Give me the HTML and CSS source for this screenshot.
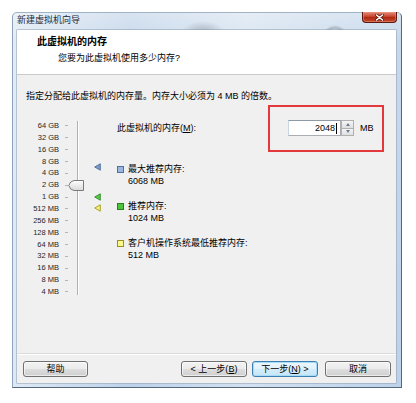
FILE: index.html
```html
<!DOCTYPE html>
<html lang="zh">
<head>
<meta charset="utf-8">
<link rel="stylesheet" href="styles.css">
</head>
<body>
<div class="window">
  <div class="titlebar">
    <span class="title">新建虚拟机向导</span>
    <div class="close">
      <svg width="9" height="7" viewBox="0 0 9 7"><path d="M1.5 1 L7.5 6 M7.5 1 L1.5 6" stroke="#5a1a10" stroke-width="3" stroke-linecap="round"/><path d="M1.5 1 L7.5 6 M7.5 1 L1.5 6" stroke="#fff" stroke-width="1.6" stroke-linecap="round"/></svg>
    </div>
  </div>
  <div class="content">
    <div class="header">
      <div class="h-title">此虚拟机的内存</div>
      <div class="h-sub">您要为此虚拟机使用多少内存?</div>
    </div>
    <div class="body">
      <p class="intro">指定分配给此虚拟机的内存量。内存大小必须为 4 MB 的倍数。</p>
      <div class="main">
        <div class="slider">
          <ul class="labels">
            <li>64 GB</li><li>32 GB</li><li>16 GB</li><li>8 GB</li><li>4 GB</li><li>2 GB</li><li>1 GB</li><li>512 MB</li><li>256 MB</li><li>128 MB</li><li>64 MB</li><li>32 MB</li><li>16 MB</li><li>8 MB</li><li>4 MB</li>
          </ul>
          <div class="ticks">
            <i></i><i></i><i></i><i></i><i></i><i></i><i></i><i></i><i></i><i></i><i></i><i></i><i></i><i></i><i></i>
          </div>
          <div class="track"></div>
          <svg class="thumb" width="16" height="11" viewBox="0 0 16 11">
            <defs><linearGradient id="tg" x1="0" y1="0" x2="0" y2="1"><stop offset="0" stop-color="#ffffff"/><stop offset="1" stop-color="#d8d8d8"/></linearGradient></defs>
            <path d="M0.8 5.5 Q2 1 6 0.5 H15.5 V10.5 H6 Q2 10 0.8 5.5 Z" fill="url(#tg)" stroke="#7a7a7a" stroke-width="1"/>
          </svg>
          <svg class="marker m-max" width="7" height="8" viewBox="0 0 7 8"><path d="M0.7 4 L6.3 0.8 V7.2 Z" fill="#7d9cc8" stroke="#4a6a98" stroke-width="0.9" stroke-linejoin="round"/></svg>
          <svg class="marker m-rec" width="7" height="8" viewBox="0 0 7 8"><path d="M0.7 4 L6.3 0.8 V7.2 Z" fill="#5cc84a" stroke="#2f8a2a" stroke-width="0.9" stroke-linejoin="round"/></svg>
          <svg class="marker m-min" width="7" height="8" viewBox="0 0 7 8"><path d="M0.7 4 L6.3 0.8 V7.2 Z" fill="#f4ee7a" stroke="#a49a20" stroke-width="0.9" stroke-linejoin="round"/></svg>
        </div>
        <div class="right">
          <div class="mem-row">
            <span class="mem-label">此虚拟机的内存(<u>M</u>):</span>
            <div class="spin-group">
              <div class="input"><span>2048</span><i class="caret"></i></div>
              <div class="spinner">
                <div class="spin-btn"><i class="up"></i></div>
                <div class="spin-btn"><i class="down"></i></div>
              </div>
              <span class="unit">MB</span>
              <div class="highlight"></div>
            </div>
          </div>
          <div class="legend">
            <div class="item"><span class="sq sq-blue"></span><div>最大推荐内存:<br>6068 MB</div></div>
            <div class="item"><span class="sq sq-green"></span><div>推荐内存:<br>1024 MB</div></div>
            <div class="item"><span class="sq sq-yellow"></span><div>客户机操作系统最低推荐内存:<br>512 MB</div></div>
          </div>
        </div>
      </div>
    </div>
    <div class="footer">
      <div class="btn btn-help">帮助</div>
      <div class="btn-group">
        <div class="btn">&lt; 上一步(<u>B</u>)</div>
        <div class="btn btn-default">下一步(<u>N</u>) &gt;</div>
        <div class="btn btn-cancel">取消</div>
      </div>
    </div>
  </div>
</div>
</body>
</html>
```
FILE: styles.css
```css
* { box-sizing: border-box; }
body {
  margin: 0;
  background: #ffffff;
  font-family: "Liberation Sans", "Noto Sans CJK SC", sans-serif;
  font-size: 9px;
  color: #000;
}
.window {
  margin: 12px 0 0 12px;
  width: 390px;
  height: 376px;
  border: 1px solid #56677c;
  border-left-color: #8ea4bc;
  border-top-color: #9fb2c6;
  border-radius: 5px 5px 0 0;
  padding: 0 5px 4px 4px;
  display: flex;
  flex-direction: column;
  background:
    radial-gradient(ellipse 22px 12px at 190px 20px, rgba(70,80,90,0.35), rgba(70,80,90,0) 100%),
    radial-gradient(circle at 322px 26px, rgba(90,100,110,0) 9px, rgba(90,100,110,0.35) 11px, rgba(90,100,110,0) 14px),
    linear-gradient(90deg, rgba(255,255,255,0.5) 0%, rgba(255,255,255,0) 30%, rgba(255,255,255,0.35) 60%, rgba(255,255,255,0) 100%),
    linear-gradient(180deg, #d7e3f0 0%, #c6d8ec 8%, #bcd2ea 100%);
}
.titlebar {
  height: 17px;
  display: flex;
  justify-content: space-between;
  align-items: flex-start;
}
.title {
  padding-top: 1px;
  line-height: 12px;
  font-size: 9px;
  color: #1e2a36;
}
.close {
  width: 35px;
  height: 11px;
  margin-top: -1px;
  margin-right: -1px;
  border: 1px solid #5b1a10;
  border-top: none;
  border-radius: 0 0 4px 4px;
  background: linear-gradient(180deg, #e08c7a 0%, #cc4c36 42%, #b02a14 55%, #c44a30 100%);
  display: flex;
  align-items: center;
  justify-content: center;
  box-shadow: inset 0 0 0 1px rgba(240,150,130,0.5);
}
.close svg { display: block; }
.content {
  flex: 1;
  display: flex;
  flex-direction: column;
  background: #f0f0f0;
  box-shadow: 0 0 0 0.5px #8c9bab;
}
.header {
  height: 45px;
  background: #ffffff;
  border-bottom: 1px solid #cacaca;
  padding: 6px 0 0 20px;
}
.h-title {
  font-weight: bold;
  font-size: 10px;
  line-height: 12px;
}
.h-sub {
  margin-top: 4px;
  padding-left: 21px;
  line-height: 12px;
}
.body {
  flex: 1;
  padding: 15px 9px 0;
}
.intro {
  margin: 0;
  line-height: 12px;
}
.main {
  display: flex;
  margin-top: 18px;
}
.slider {
  position: relative;
  width: 90px;
  display: flex;
}
.labels {
  list-style: none;
  margin: 0;
  padding: 0;
  width: 33px;
  text-align: right;
  font-size: 7.5px;
  color: #262626;
}
.labels li {
  height: 11.86px;
  line-height: 11.86px;
  white-space: nowrap;
}
.ticks {
  width: 13px;
  display: flex;
  flex-direction: column;
}
.ticks i {
  height: 11.86px;
  display: flex;
  align-items: center;
}
.ticks i::before {
  content: "";
  display: block;
  margin-left: 6px;
  width: 3px;
  height: 1px;
  background: #b4b4b4;
}
.track {
  width: 18px;
  margin: 1px 0 3px;
  border-left: 1px solid #b0b0b0;
  margin-left: 5px;
  box-shadow: inset 1px 0 0 #ffffff;
}
.thumb {
  position: absolute;
  left: 42px;
  top: 60px;
}
.marker {
  position: absolute;
  left: 68px;
}
.m-max { top: 43px; }
.m-rec { top: 73px; }
.m-min { top: 84px; }
.right {
  display: flex;
  flex-direction: column;
}
.mem-row {
  display: flex;
  align-items: center;
  height: 16px;
}
.mem-label {
  width: 172px;
  padding-left: 1px;
  line-height: 12px;
}
.spin-group {
  position: relative;
  display: flex;
  align-items: center;
}
.input {
  width: 53px;
  height: 16px;
  background: #ffffff;
  border: 1px solid #abadb3;
  border-top-color: #8e9aa8;
  border-left-color: #c8d6e4;
  display: flex;
  align-items: center;
  justify-content: flex-end;
  padding-right: 3px;
  line-height: 12px;
}
.caret {
  width: 1px;
  height: 11px;
  background: #000;
  margin-left: 1px;
}
.spinner {
  width: 13px;
  height: 16px;
  display: flex;
  flex-direction: column;
}
.spin-btn {
  flex: 1;
  border: 1px solid #b0b0b0;
  background: linear-gradient(180deg, #f6f6f6, #dedede);
  display: flex;
  align-items: center;
  justify-content: center;
}
.spin-btn + .spin-btn { border-top: none; }
.up, .down {
  width: 0;
  height: 0;
  border-left: 2.5px solid transparent;
  border-right: 2.5px solid transparent;
}
.up { border-bottom: 3px solid #6a7c90; }
.down { border-top: 3px solid #6a7c90; }
.unit {
  margin-left: 6px;
  line-height: 12px;
}
.highlight {
  position: absolute;
  left: -20px;
  top: -15px;
  width: 116px;
  height: 47px;
  border: 2px solid #e4393c;
}
.legend {
  margin-top: 28px;
  display: flex;
  flex-direction: column;
  gap: 14px;
}
.item {
  display: flex;
  line-height: 11.5px;
}
.sq {
  width: 7px;
  height: 7px;
  margin: 2px 4px 0 1px;
  border: 1px solid;
  flex: none;
}
.sq-blue { background: #9bb6df; border-color: #50709e; }
.sq-green { background: #4cc43c; border-color: #2a7e22; }
.sq-yellow { background: #fbf78a; border-color: #9a9020; }
.footer {
  height: 30px;
  border-top: 1px solid #dcdcdc;
  box-shadow: inset 0 1px 0 #ffffff;
  padding: 7px 5px 0 6px;
  display: flex;
}
.btn {
  width: 66px;
  height: 16px;
  border: 1px solid #707070;
  border-radius: 3px;
  background: linear-gradient(180deg, #f3f3f3 0%, #ebebeb 48%, #dddddd 52%, #cfcfcf 100%);
  box-shadow: inset 0 0 0 1px rgba(255,255,255,0.6);
  text-align: center;
  line-height: 14px;
  font-size: 9px;
  white-space: nowrap;
}
.btn-help { width: 65px; }
.btn-group {
  margin-left: auto;
  display: flex;
  gap: 5px;
}
.btn-default {
  border-color: #3c7fb1;
  background: linear-gradient(180deg, #eaf6fd 0%, #e2f2fc 48%, #d4ecfa 52%, #c6e5f7 100%);
  box-shadow: inset 0 0 0 1px #a6dcf8;
}
.btn-cancel { margin-left: 2px; }
```
